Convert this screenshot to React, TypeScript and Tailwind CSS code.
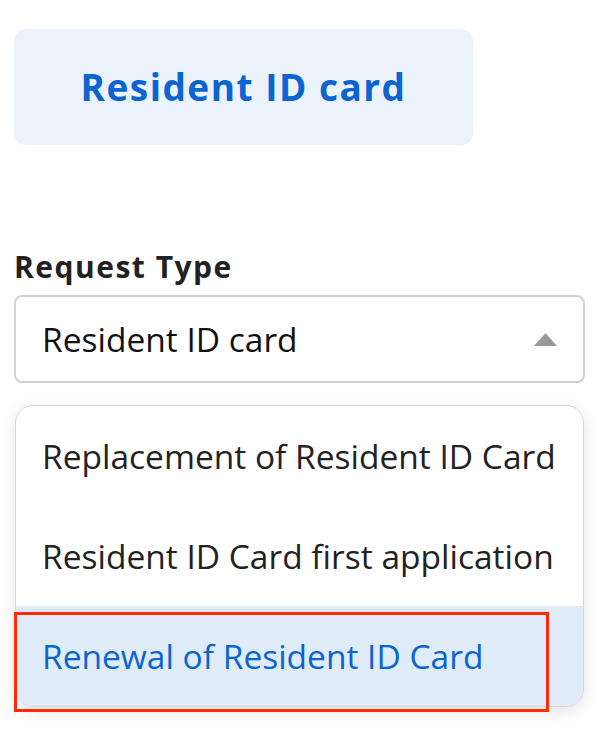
import React from 'react';

export default function App() {
  const options = [
    { id: 1, label: 'Replacement of Resident ID Card', active: false },
    { id: 2, label: 'Resident ID Card first application', active: false },
    { id: 3, label: 'Renewal of Resident ID Card', active: true },
  ];

  return (
    <div className="w-[606px] h-[732px] bg-white overflow-hidden font-['Open_Sans',sans-serif]">
      <div className="pl-[14px] pt-[29px]">
        <div className="w-[459px] h-[116px] rounded-[12px] bg-[#ebf2fc] flex items-center justify-center">
          <span className="text-[37px] font-bold tracking-[1.5px] text-[#0a64d2]">Resident ID card</span>
        </div>
      </div>

      <div className="px-[14px] mt-[104px]">
        <div className="text-[30px] font-bold tracking-[1.5px] text-[#222] leading-[36px]">Request Type</div>
        <div className="mt-[10px] w-[571px] h-[88px] rounded-[8px] border-2 border-[#d2d2d2] flex items-center justify-between pl-[26px] pr-[26px]">
          <span className="text-[33.5px] text-[#111]">Resident ID card</span>
          <svg width="23" height="13" viewBox="0 0 23 13">
            <path d="M11.5 0 L23 13 L0 13 Z" fill="#999" />
          </svg>
        </div>

        <div className="relative mt-[22px] ml-px w-[569px]">
          <div className="rounded-[18px] border border-[#d6d6d6] bg-white overflow-hidden shadow-[0_4px_16px_rgba(0,0,0,0.12)]">
            {options.map(o => (
              <div
                key={o.id}
                className={
                  o.active
                    ? 'h-[100px] flex items-center pl-[26px] bg-[#dfebf7] text-[33.5px] text-[#0a64d2]'
                    : 'h-[100px] flex items-center pl-[26px] text-[33.5px] text-[#222]'
                }
              >
                {o.label}
              </div>
            ))}
          </div>
          <div className="absolute left-[-1px] top-[207px] w-[535px] h-[100px] border-[3px] border-[#ff2a0a]"></div>
        </div>
      </div>
    </div>
  );
}
